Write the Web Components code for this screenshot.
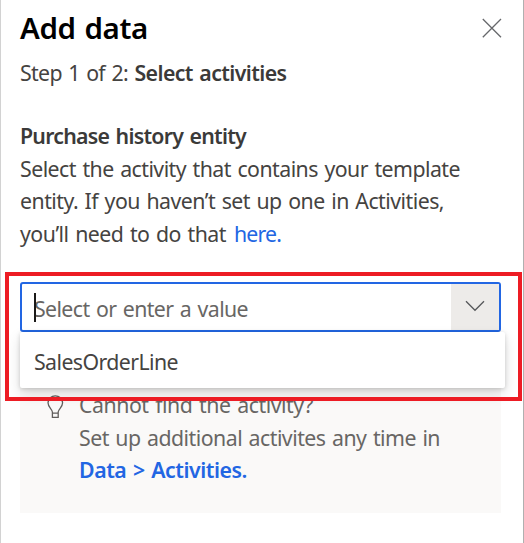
<!DOCTYPE html>
<html lang="en">
<head>
<meta charset="utf-8">
<title>Add data</title>
<style>
html,body{margin:0;height:100%;background:#fff;overflow:hidden}
body{font:21.3px/32.4px "Noto Sans","Open Sans",sans-serif;word-spacing:1.5px;color:#454341}
</style>
</head>
<body>
<side-panel>
  <panel-header slot="header"><text-line w="128">Add data</text-line></panel-header>
  <step-label><text-line w="108">Step 1 of 2:</text-line><text-line w="152" bold>Select activities</text-line></step-label>
  <entity-info>
    <text-line slot="title" w="226" bold>Purchase history entity</text-line>
    <text-line w="440">Select the activity that contains your template</text-line>
    <text-line w="424">entity. If you haven’t set up one in Activities,</text-line>
    <span><text-line w="206">you’ll need to do that</text-line><text-line w="47" link>here.</text-line></span>
  </entity-info>
  <combo-box>
    <text-line w="214">Select or enter a value</text-line>
    <text-line slot="option" w="144">SalesOrderLine</text-line>
  </combo-box>
  <tip-card>
    <text-line w="234">Cannot find the activity?</text-line>
    <text-line w="361">Set up additional activites any time in</text-line>
    <text-line w="168" link bold>Data &gt; Activities.</text-line>
  </tip-card>
  <focus-frame slot="overlay"></focus-frame>
</side-panel>
<script>
const define = (name, html, extra) => customElements.define(name, class extends HTMLElement {
  constructor() {
    super();
    this.attachShadow({ mode: 'open' }).innerHTML = html;
  }
  connectedCallback() { if (extra) extra(this); }
});

define('side-panel', `<style>
  :host{display:flex;flex-direction:column;position:relative;box-sizing:border-box;height:543px;padding:0 21px 0 19px;
    border-left:1px solid #d2d2d2;border-right:1px solid #b0b0b0;background:#fff}
</style><slot name="header"></slot><slot></slot><slot name="overlay"></slot>`);

define('panel-header', `<style>
  :host{display:flex;justify-content:space-between;height:57px;font-size:29.5px;line-height:55px;font-weight:600;color:#000}
  svg{display:block;margin-top:18px}
</style><slot></slot><svg width="20" height="20" viewBox="0 0 20 20" fill="none" stroke="#66686b" stroke-width="1.3"><path d="M.8 1 19 19.2M19 1 .8 19.2"/></svg>`);

define('step-label', `<style>
  :host{display:flex;gap:6.5px;height:63px}
</style><slot></slot>`);

define('entity-info', `<style>
  :host{display:flex;flex-direction:column;height:162px}
  slot[name]::slotted(*){margin-bottom:.6px}
  ::slotted(span){display:flex;gap:8px}
</style><slot name="title"></slot><slot></slot>`);

define('combo-box', `<style>
  :host{display:block;position:relative;z-index:1;width:481px;height:50px}
  .field{display:flex;box-sizing:border-box;height:50px;border:2.5px solid #2266e3;border-radius:3px;background:#fff}
  .value{flex:1;display:flex;line-height:50px;color:#686664;padding-left:12px;position:relative}
  .caret{position:absolute;left:11.5px;top:9px;width:2px;height:29px;background:#1b1a19}
  .button{width:48px;background:#edebe9;display:flex;justify-content:center;align-items:center}
  svg{display:block;margin-bottom:2px}
  .menu{position:absolute;left:0;top:50px;width:485px;height:56px;box-sizing:border-box;padding-left:14px;line-height:59px;
    background:#fff;border-radius:2px;box-shadow:0 6px 14px rgba(0,0,0,.13),0 1px 4px rgba(0,0,0,.16)}
</style>
<div class="field"><div class="value"><slot></slot><i class="caret"></i></div>
<div class="button"><svg width="20" height="12" viewBox="0 0 20 12" fill="none" stroke="#55575a" stroke-width="1.3"><path d="M1 1.3 10 10.3 19 1.3"/></svg></div></div>
<div class="menu"><slot name="option"></slot></div>`);

define('tip-card', `<style>
  :host{display:flex;gap:13px;box-sizing:border-box;width:481px;height:181px;padding:56px 0 0 26px;background:#faf9f8;color:#686664}
  .lines{display:flex;flex-direction:column;margin-top:1.4px}
  svg{display:block;margin-top:7px}
</style>
<svg width="20" height="24" viewBox="0 0 20 24" fill="none" stroke="#605e5c" stroke-width="1.3"><path d="M6.4 22.4V17C6.4 14.3 2 12.2 2 7.8A7.3 7.3 0 0 1 9.3.8a7.3 7.3 0 0 1 7.3 7c0 4.4-4.4 6.5-4.4 9.2v5.4ZM6.4 18.1h5.8"/></svg>
<div class="lines"><slot></slot></div>`);

define('focus-frame', `<style>
  :host{position:absolute;z-index:2;left:4px;top:272px;width:517px;height:129px;box-sizing:border-box;border:4px solid #ed1c24}
</style>`);

/* One line of text, tracked so that it takes up the width given in "w".
   Defined last: it measures with the font its container sets. */
define('text-line', `<style>
  :host{display:inline-block;white-space:nowrap;vertical-align:top}
  :host([bold]){font-weight:600;color:#3b3a39}
  :host([link]){color:#2266e3}
  span{display:inline-block}
</style><span><slot></slot></span>`, el => {
  const s = el.shadowRoot.querySelector('span');
  const w = +el.getAttribute('w');
  s.style.letterSpacing = (w - s.getBoundingClientRect().width) / el.textContent.length + 'px';
  el.style.width = w + 'px';
});
</script>
</body>
</html>
